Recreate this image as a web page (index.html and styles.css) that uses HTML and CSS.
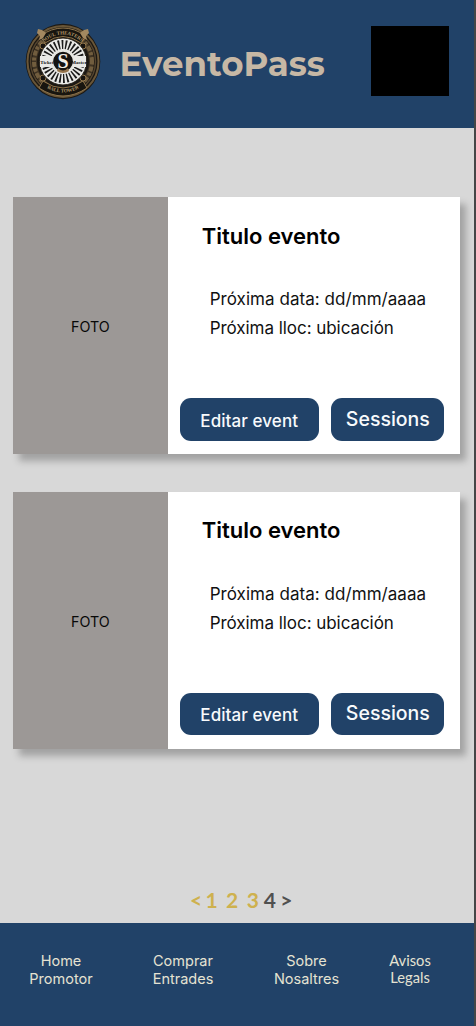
FILE: index.html
```html
<!DOCTYPE html>
<html lang="ca">
<head>
<meta charset="utf-8">
<title>EventoPass</title>
<link rel="stylesheet" href="styles.css">
</head>
<body>
<div class="screen">
  <header class="header">
    <svg class="logo" viewBox="0 0 76 77">
      <defs>
        <path id="arc-top" d="M11 38.500A27 27 0 0 1 65 38.500"/>
        <path id="arc-bottom" d="M7 38.500A31 31 0 0 0 69 38.500"/>
      </defs>
      <ellipse cx="38" cy="38.500" rx="37.300" ry="37.700" fill="#1c1813"/>
      <circle cx="38" cy="38.500" r="35.500" fill="none" stroke="#695638" stroke-width="2"/>
      <circle cx="38" cy="38.500" r="32.500" fill="none" stroke="#54442e" stroke-width="1.500"/>
      <circle cx="38" cy="38.500" r="28.500" fill="none" stroke="#3f3323" stroke-width="5"/>
      <circle cx="38" cy="38.500" r="29" fill="none" stroke="#715d3e" stroke-width="4" stroke-dasharray="3 2 5 1.500"/>
      <path d="M15 13Q38-3 61 13L56 20Q38 7 20 20Z" fill="#18150f" stroke="#8e744b"/>
      <path d="M18 58Q38 72 58 58L62 65Q38 81 14 65Z" fill="#18150f" stroke="#8e744b"/>
      <path d="M13 6l4 1 4 3-3 5-4 2 1-4-3-3zM63 6l-4 1-4 3 3 5 4 2-1-4 3-3z" fill="#a38860"/>
      <g fill="#17130f" stroke="#96794d"><circle cx="18" cy="23" r="3"/><circle cx="58" cy="23" r="3"/><circle cx="18" cy="55" r="3"/><circle cx="58" cy="55" r="3"/></g>
      <circle cx="38" cy="38.500" r="23.500" fill="#e9e9e6" stroke="#28231a"/>
      <circle cx="38" cy="38.500" r="17" fill="none" stroke="#1b1b1b" stroke-width="9" stroke-dasharray="1.600 1.960"/>
      <path d="M15 33h14v11H15zM47 33h14v11H47z" fill="#e9e9e6"/>
      <circle cx="38" cy="38.500" r="10.500" fill="#151311" stroke="#e5e5e0" stroke-width="1.300"/>
      <path d="M33 45q5 5 10 0l1 3q-6 4-12 0z" fill="#94734b"/>
      <text class="logo-s" x="38" y="45">S</text>
      <text class="logo-side" x="22" y="40.500">Ticket</text>
      <text class="logo-side" x="54" y="40.500">Master</text>
      <text class="logo-arc"><textPath href="#arc-top" startOffset="50%">SOUL THEATERS</textPath></text>
      <text class="logo-arc"><textPath href="#arc-bottom" startOffset="50%">BALL TOWER</textPath></text>
    </svg>
    <h1 class="brand">EventoPass</h1>
    <div class="avatar"></div>
  </header>
  <main class="events">
    <article class="card">
      <div class="photo">FOTO</div>
      <div class="info">
        <h2 class="title">Titulo evento</h2>
        <p class="date">Próxima data: dd/mm/aaaa</p>
        <p class="place">Próxima lloc: ubicación</p>
        <div class="actions">
          <button class="button edit">Editar event</button>
          <button class="button sessions">Sessions</button>
        </div>
      </div>
    </article>
    <article class="card">
      <div class="photo">FOTO</div>
      <div class="info">
        <h2 class="title">Titulo evento</h2>
        <p class="date">Próxima data: dd/mm/aaaa</p>
        <p class="place">Próxima lloc: ubicación</p>
        <div class="actions">
          <button class="button edit">Editar event</button>
          <button class="button sessions">Sessions</button>
        </div>
      </div>
    </article>
    <nav class="pages">
      <span class="prev">&lt;</span><span class="one">1</span><span class="two">2</span><span class="three">3</span><span class="current">4</span><span class="next">&gt;</span>
    </nav>
  </main>
  <footer class="footer">
    <a class="link">Home<br>Promotor</a>
    <a class="link">Comprar<br>Entrades</a>
    <a class="link">Sobre<br>Nosaltres</a>
    <a class="link legal">Avisos<br>Legals</a>
  </footer>
</div>
</body>
</html>
```

FILE: styles.css
```css
* { box-sizing: border-box; }
body { margin: 0; background: #454647; font-family: Inter, sans-serif; }
h1, h2, p { margin: 0; font-weight: 400; white-space: nowrap; }
.screen { width: 474px; height: 1026px; background: #d8d8d8; display: flex; flex-direction: column; }
.header { height: 128px; flex: none; background: #214268; display: flex; align-items: flex-start; }
.logo { width: 76px; height: 77px; margin: 22.500px 0 0 25px; flex: none; }
.logo-s { font: bold 20px "Liberation Serif", serif; fill: #f2eee7; text-anchor: middle; }
.logo-side { font: bold 5px "Liberation Serif", serif; fill: #111; text-anchor: middle; }
.logo-arc { font: bold 5px "Liberation Serif", serif; fill: #b79b6d; text-anchor: middle; }
.brand { width: 251px; margin-top: 43px; padding-left: 18.500px; font: 700 34px/42px Montserrat, Inter, sans-serif; letter-spacing: 0; color: #c7b8a5; }
.avatar { width: 78px; height: 70.400px; margin-top: 26px; margin-left: 19px; background: #000; flex: none; }
.events { flex: 1; display: flex; flex-direction: column; padding: 197.400px 0 0 13px; margin-top: -128px; }
.card { width: 447px; height: 256.800px; flex: none; display: flex; background: #fff; box-shadow: 6px 7px 7px rgba(0, 0, 0, .25); margin-bottom: 37.800px; }
.photo { width: 154.700px; flex: none; background: #9c9896; display: flex; justify-content: center; font-size: 14.300px; line-height: 20px; padding-top: 120px; color: #080808; }
.info { flex: 1; padding: 23.200px 0 0 12px; }
.title { margin-left: 22px; font-weight: 600; font-size: 22px; line-height: 30px; color: #000; }
.date, .place { font-size: 17px; line-height: 29px; color: #111; margin-left: 30px; letter-spacing: 0.050px; }
.date { margin-top: 34.500px; }
.place { letter-spacing: -0.050px; }
.actions { display: flex; gap: 12px; margin-top: 55.200px; }
.button { height: 42.500px; padding: 0; border: 0; border-radius: 11px; background: #214268; color: #f8fafc; font-family: Inter, sans-serif; font-weight: 500; }
.edit { width: 139px; font-size: 17px; padding-top: 2px; letter-spacing: 0.080px; }
.sessions { width: 113.300px; font-size: 19.500px; padding: 0 0 2px 1px; }
.pages { display: flex; margin-top: 100px; padding-left: 177px; font: 700 21px/26px Lato, sans-serif; color: #ceb14e; }
.prev { width: 15.500px; }
.one, .two { width: 20.600px; }
.three { width: 17px; }
.current { width: 16.500px; }
.current, .next { color: #505050; }
.footer { height: 103px; flex: none; background: #214268; color: #e5e2d2; display: grid; grid-template-columns: 122px 122px 125px 82px; padding-top: 29px; font-size: 14.500px; line-height: 18px; text-align: center; }
.legal { font: 14.700px/17px Lato, sans-serif; }
```
